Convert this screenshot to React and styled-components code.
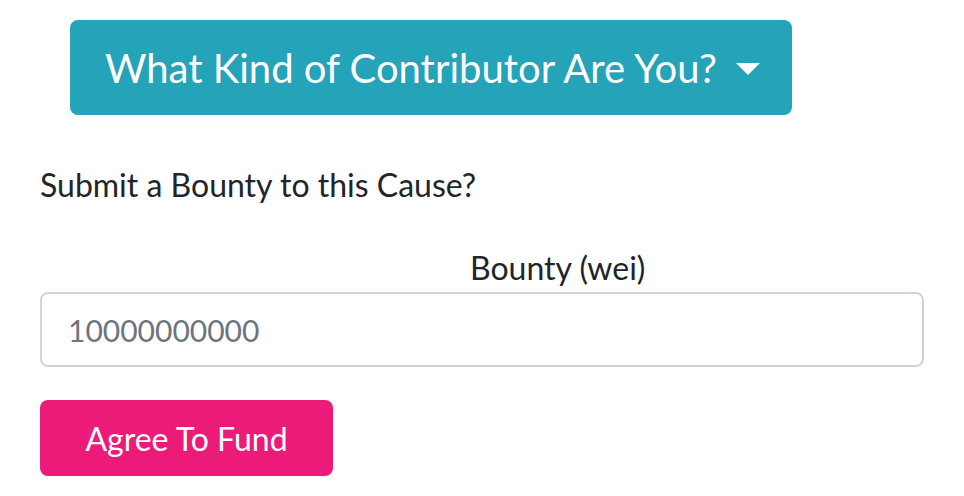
import React from "react";
import styled, { createGlobalStyle } from "styled-components";

const GlobalStyle = createGlobalStyle`
  body {
    margin: 0;
    background: #ffffff;
    font-family: Lato, "Open Sans", sans-serif;
    color: #212529;
  }
`;

const Page = styled.div`
  display: flex;
  flex-direction: column;
  padding: 20px 40px 0 40px;
  width: 964px;
  box-sizing: border-box;
`;

const DropdownToggle = styled.button`
  align-self: flex-start;
  margin-left: 30px;
  display: flex;
  align-items: center;
  gap: 19px;
  height: 95px;
  padding: 0 32px 0 35px;
  border: none;
  border-radius: 8px;
  background: #25a3b8;
  color: #ffffff;
  font-family: inherit;
  font-size: 40px;
  cursor: pointer;
`;

const Caret = styled.span`
  width: 0;
  height: 0;
  border-top: 12px solid #ffffff;
  border-left: 12px solid transparent;
  border-right: 12px solid transparent;
  margin-top: 2px;
`;

const Prompt = styled.p`
  margin: 51px 0 0;
  font-size: 32px;
  line-height: 38px;
`;

const Label = styled.label`
  margin: 45px 0 0 430px;
  font-size: 32px;
  line-height: 38px;
`;

const Input = styled.input`
  margin-top: 5px;
  height: 75px;
  box-sizing: border-box;
  padding: 0 26px;
  border: 2px solid #ced4da;
  border-radius: 8px;
  font-family: inherit;
  font-size: 30px;
  color: #6c757d;
  outline: none;
`;

const FundButton = styled.button`
  align-self: flex-start;
  margin-top: 33px;
  width: 293px;
  height: 76px;
  border: none;
  border-radius: 8px;
  background: #ec1a78;
  color: #ffffff;
  font-family: inherit;
  font-size: 32px;
  cursor: pointer;
`;

const App = () => {
  return (
    <>
      <GlobalStyle />
      <Page>
        <DropdownToggle>
          What Kind of Contributor Are You?
          <Caret />
        </DropdownToggle>
        <Prompt>Submit a Bounty to this Cause?</Prompt>
        <Label htmlFor="bounty">Bounty (wei)</Label>
        <Input id="bounty" type="text" defaultValue="10000000000" />
        <FundButton>Agree To Fund</FundButton>
      </Page>
    </>
  );
};

export default App;
